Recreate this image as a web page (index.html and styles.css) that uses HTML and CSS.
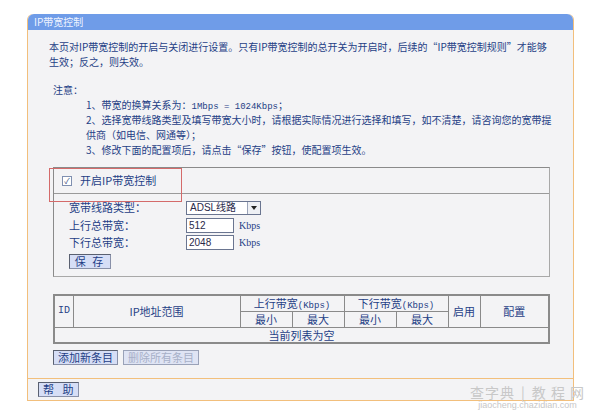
FILE: index.html
```html
<!DOCTYPE html>
<html lang="zh-CN">
<head>
    <meta charset="UTF-8">
    <title>IP带宽控制</title>
    <link rel="stylesheet" href="styles.css">
</head>
<body>
    <div class="panel">
        <div class="panel-head">IP带宽控制</div>
        <div class="panel-body">
            <p class="intro">本页对IP带宽控制的开启与关闭进行设置。只有IP带宽控制的总开关为开启时，后续的“IP带宽控制规则”才能够<br>生效；反之，则失效。</p>

            <p class="note-title">注意：</p>
            <ol class="notes">
                <li>1、带宽的换算关系为：<span class="mono">1Mbps = 1024Kbps</span>；</li>
                <li>2、选择宽带线路类型及填写带宽大小时，请根据实际情况进行选择和填写，如不清楚，请咨询您的宽带提<br>供商（如电信、网通等）；</li>
                <li>3、修改下面的配置项后，请点击“保存”按钮，使配置项生效。</li>
            </ol>

            <div class="settings">
                <div class="switch-row">
                    <label class="switch"><span class="check">&#10003;</span>开启IP带宽控制</label>
                </div>
                <div class="form">
                    <div class="form-row">
                        <span class="label">宽带线路类型：</span>
                        <span class="select"><span class="select-text">ADSL线路</span><span class="select-btn"></span></span>
                    </div>
                    <div class="form-row">
                        <span class="label">上行总带宽：</span>
                        <span class="input">512</span>
                        <span class="unit">Kbps</span>
                    </div>
                    <div class="form-row">
                        <span class="label">下行总带宽：</span>
                        <span class="input">2048</span>
                        <span class="unit">Kbps</span>
                    </div>
                    <button class="btn btn-save">保 存</button>
                </div>
            </div>

            <table class="rules">
                <tr>
                    <th rowspan="2" class="c-id">ID</th>
                    <th rowspan="2" class="c-ip">IP地址范围</th>
                    <th colspan="2">上行带宽<span class="mono">(Kbps)</span></th>
                    <th colspan="2">下行带宽<span class="mono">(Kbps)</span></th>
                    <th rowspan="2" class="c-on">启用</th>
                    <th rowspan="2" class="c-cfg">配置</th>
                </tr>
                <tr>
                    <th class="c-bw">最小</th>
                    <th class="c-bw">最大</th>
                    <th class="c-bw">最小</th>
                    <th class="c-bw">最大</th>
                </tr>
                <tr>
                    <td colspan="8" class="empty">当前列表为空</td>
                </tr>
            </table>

            <div class="actions">
                <button class="btn">添加新条目</button>
                <button class="btn" disabled>删除所有条目</button>
            </div>
        </div>
        <div class="panel-foot">
            <button class="btn btn-help">帮 助</button>
        </div>
    </div>

    <div class="watermark">
        <div class="wm-top">查字典<span class="wm-bar">|</span>教 程 网</div>
        <div class="wm-url">jiaocheng.chazidian.com</div>
    </div>
</body>
</html>
```

FILE: styles.css
```css
* {
    margin: 0;
    padding: 0;
    box-sizing: border-box;
}

body {
    font-family: "Noto Sans CJK SC", "Liberation Sans", sans-serif;
    font-size: 11px;
    line-height: 15px;
    color: #1f3f86;
    background: #fff;
    width: 600px;
    height: 413px;
    overflow: hidden;
    white-space: nowrap;
}

.mono {
    font-family: "Liberation Mono", "Noto Sans CJK SC", monospace;
    font-size: 9px;
    line-height: 1;
}

.panel {
    margin: 14px 0 0 27px;
    width: 547px;
    height: 387px;
    background: #f3f3f5;
    border: 1px solid #f2bf7c;
    border-top: none;
    border-radius: 6px 6px 0 0;
    display: flex;
    flex-direction: column;
}

.panel-head {
    height: 16px;
    line-height: 16px;
    padding-left: 6px;
    background: #6f9ce8;
    color: #eef3ff;
    font-size: 10px;
    border-radius: 6px 6px 0 0;
}

.panel-body {
    flex: 1;
    padding: 9px 20px 0 21px;
}

.intro,
.notes {
    font-size: 10px;
}

.note-title {
    margin-top: 13px;
    margin-left: 4px;
    font-size: 10px;
}

.notes {
    list-style: none;
    margin-left: 37px;
}

.settings {
    margin: 10px 0 0 4px;
    width: 497px;
    border: 1px solid #8a8a8a;
    border-right-color: #a8a8a8;
    border-bottom-color: #a8a8a8;
}

.switch-row {
    height: 26px;
    border-bottom: 1px solid #9a9a9a;
    position: relative;
}

.switch-row::after {
    content: "";
    position: absolute;
    left: -5px;
    top: 0;
    width: 131px;
    height: 32px;
    border: 1px solid #d46a6a;
}

.switch {
    display: flex;
    align-items: center;
    gap: 8px;
    height: 25px;
    padding-left: 8px;
}

.check {
    width: 10px;
    height: 10px;
    border: 1px solid #7f8fb0;
    background: #fff;
    color: #3a4a7a;
    font-size: 8px;
    line-height: 8px;
    text-align: center;
}

.form {
    padding: 5px 0 7px 15px;
}

.form-row {
    display: flex;
    align-items: center;
    height: 17.5px;
}

.label {
    width: 117px;
}

.select {
    display: flex;
    width: 75px;
    height: 14px;
    border: 1px solid #6a7590;
    background: #fff;
    color: #2a2a4a;
    font-family: "Liberation Sans", "Noto Sans CJK SC", sans-serif;
    font-size: 10px;
    line-height: 12px;
}

.select-text {
    flex: 1;
    padding-left: 3px;
}

.select-btn {
    position: relative;
    width: 13px;
    border-left: 1px solid #9aa3b8;
    background: #eef0f4;
}

.select-btn::after {
    content: "";
    position: absolute;
    left: 3px;
    top: 4px;
    border: 3px solid transparent;
    border-top: 4px solid #222;
}

.input {
    width: 48px;
    height: 15px;
    border: 1px solid #6a7590;
    background: #fff;
    color: #2a2a4a;
    padding-left: 2px;
    font-family: "Liberation Sans", sans-serif;
    font-size: 10px;
    line-height: 13px;
}

.unit {
    margin-left: 5px;
    font-family: "Liberation Serif", serif;
    font-size: 10px;
}

.btn {
    font-family: "Noto Sans CJK SC", sans-serif;
    font-size: 11px;
    line-height: 13px;
    height: 15px;
    padding: 0 4px;
    white-space: nowrap;
    color: #1f3f86;
    background: #d6def6;
    border: 1px solid #5a6070;
    border-right-color: #8890a8;
    border-bottom-color: #8890a8;
}

.btn:disabled {
    color: #a7b0c8;
    border-color: #9aa2b8;
    background: #dfe4f4;
}

.btn-save {
    margin-top: 2px;
    width: 42px;
    letter-spacing: 2px;
}

.rules {
    margin: 17px 0 0 4px;
    width: 497px;
    border-collapse: collapse;
    border: 2px solid #8a8a8a;
    background: #f3f3f5;
}

.rules th,
.rules td {
    border: 1px solid #8a8a8a;
    font-weight: normal;
    height: 16px;
    padding: 0;
    line-height: 14px;
    text-align: center;
}

.rules .c-id {
    width: 19px;
    text-align: left;
    padding-left: 3px;
    font-family: "Liberation Mono", monospace;
    font-size: 10px;
}

.rules .c-ip {
    width: 167px;
}

.rules .c-bw {
    width: 52px;
}

.rules .c-on {
    width: 32px;
}

.rules .empty {
    height: 16px;
}

.actions {
    display: flex;
    gap: 5px;
    margin: 6px 0 0 4px;
}

.panel-foot {
    border-top: 1px solid #f2bf7c;
    padding: 3px 0 3px 10px;
}

.btn-help {
    width: 41px;
    letter-spacing: 3px;
}

.watermark {
    position: absolute;
    left: 470px;
    top: 384px;
    color: #c8c8c8;
    text-align: center;
}

.wm-top {
    font-size: 14px;
    line-height: 16px;
    letter-spacing: 1px;
}

.wm-bar {
    margin: 0 6px;
}

.wm-url {
    font-family: "Liberation Sans", sans-serif;
    font-size: 9px;
    line-height: 11px;
}
```
